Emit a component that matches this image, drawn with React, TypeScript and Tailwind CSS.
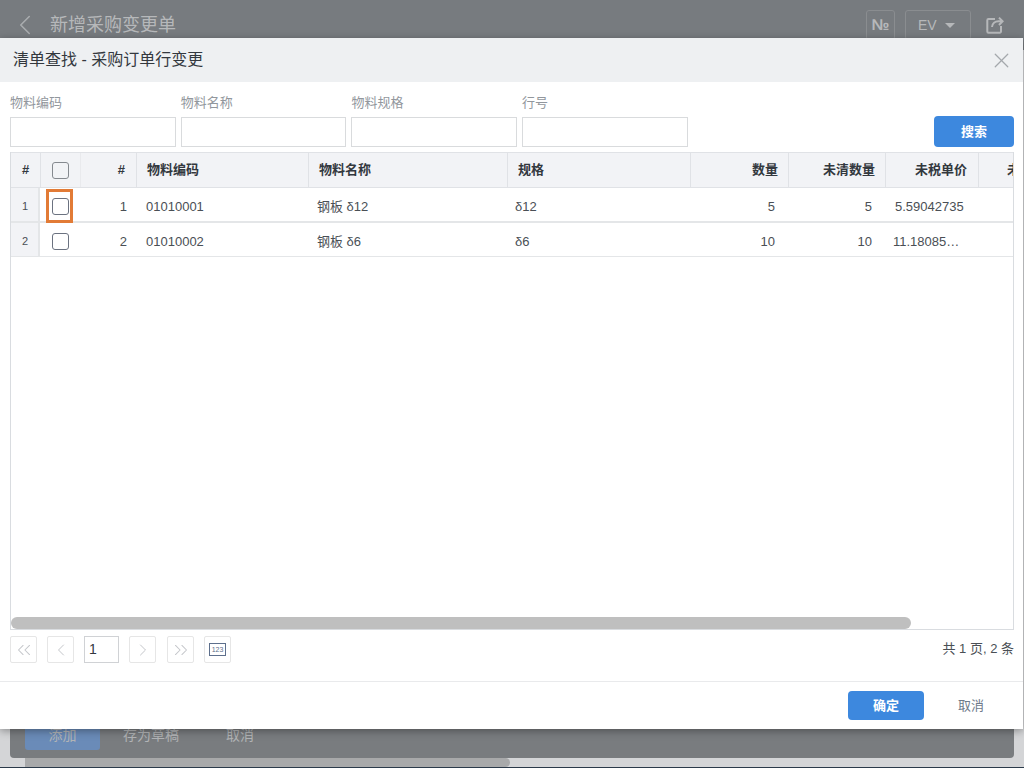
import { ChevronLeft, ChevronRight, ChevronsLeft, ChevronsRight, X } from 'lucide-react';

const font = { fontFamily: '"Liberation Sans", "Noto Sans CJK SC", sans-serif' };

const filters = ['物料编码', '物料名称', '物料规格', '行号'];

const rows = [
  { n: 1, code: '01010001', name: '钢板 δ12', spec: 'δ12', qty: '5', open: '5', price: '5.59042735' },
  { n: 2, code: '01010002', name: '钢板 δ6', spec: 'δ6', qty: '10', open: '10', price: '11.18085…' },
];

function Checkbox({ header }: { header?: boolean }) {
  return (
    <span className={`block h-[17px] w-[17px] rounded-[3px] border ${header ? 'border-[#85898f] bg-[#f2f3f6]' : 'border-[#6b7280] bg-white'}`} />
  );
}

function PageButton({ children }: { children: React.ReactNode }) {
  return (
    <button className="flex h-[27px] w-[27px] items-center justify-center rounded-[2px] border border-[#e6e6e6] bg-white text-[#c4c6ca]">
      {children}
    </button>
  );
}

export default function App() {
  return (
    <div style={font} className="relative h-[768px] w-[1024px] overflow-hidden bg-[#d4d5d7]">
      {/* page behind the modal */}
      <div className="flex h-[50px] items-center justify-between bg-[#777b7f] pl-[8px] pr-[20px]">
        <div className="flex items-center gap-[8px]">
          <ChevronLeft size={34} strokeWidth={1.1} className="text-[#a9acaf]" />
          <span className="text-[18px] text-[#b6b8ba]">新增采购变更单</span>
        </div>
        <div className="flex items-center">
          <span className="flex h-[30px] w-[29px] items-center justify-center rounded-[3px] border border-[#8a8d90] text-[16px] font-bold text-[#b6b8ba]">№</span>
          <span className="ml-[10px] flex h-[30px] w-[66px] items-center rounded-[3px] border border-[#8a8d90] pl-[12px] text-[14px] text-[#b6b8ba]">
            EV
            <span className="ml-[8px] h-0 w-0 border-x-[5px] border-t-[5px] border-x-transparent border-t-[#b6b8ba]" />
          </span>
          <svg width="18" height="18" viewBox="0 0 18 18" fill="none" stroke="#b6b8ba" strokeWidth="2" className="ml-[15px]">
            <path d="M9 3H2.5A1.2 1.2 0 0 0 1.3 4.2v11.3a1.2 1.2 0 0 0 1.2 1.2h11.3a1.2 1.2 0 0 0 1.2-1.2V10" />
            <path d="M6 11c.3-3.5 3-5.7 6.5-5.7H16M13 1.6l3.6 3.7L13 9" />
          </svg>
        </div>
      </div>
      <div className="mx-[10px] mt-[679px] flex h-[29px] items-end rounded-b-[4px] bg-[#797c7f] pb-[8px] pl-[15px] text-[14px] text-[#b2b4b6]">
        <span className="flex h-[30px] w-[75px] items-center justify-center rounded-[3px] bg-[#6a8bb8]">添加</span>
        <span className="ml-[23px] flex h-[30px] items-center">存为草稿</span>
        <span className="ml-[47px] flex h-[30px] items-center">取消</span>
      </div>
      <div className="ml-[25px] h-[9px] w-[485px] rounded-r-[5px] bg-[#a8a9aa]" />
      <div className="h-px bg-[#2b3a4a]" />

      {/* modal */}
      <div className="absolute left-0 right-px top-[38px] flex h-[691px] flex-col bg-white shadow-[0_2px_8px_rgba(0,0,0,0.35)]">
        <div className="flex h-[44px] shrink-0 items-center justify-between bg-[#eef0f2] pl-[13px] pr-[9px]">
          <span className="text-[16px] text-[#33383e]">清单查找 - 采购订单行变更</span>
          <X size={25} strokeWidth={1.2} className="text-[#a4a8ac]" />
        </div>

        <div className="flex h-[70px] shrink-0 pl-[10px] pr-[9px] pt-[12px]">
          <div className="flex gap-[5px]">
            {filters.map((label) => (
              <div key={label} className="w-[165.7px]">
                <div className="h-[23px] text-[13px] leading-[17px] text-[#92979d]">{label}</div>
                <div className="h-[30px] border border-[#d9dbdd] bg-white" />
              </div>
            ))}
          </div>
          <button className="ml-auto mt-[22px] h-[31px] w-[80px] rounded-[4px] bg-[#3d88de] text-[13px] font-bold text-white">搜索</button>
        </div>

        {/* grid */}
        <div className="relative ml-[10px] mr-[9px] h-[478px] shrink-0 overflow-hidden border-x border-b border-[#d9dce0]">
          <div className="flex h-[36px] border-y border-[#e0e2e6] bg-[#f2f3f6] text-[13px] font-bold text-[#33383e]">
            <div className="flex w-[30px] shrink-0 items-center justify-center border-r border-[#e0e2e6]">#</div>
            <div className="flex w-[40px] shrink-0 items-center justify-center border-r border-[#e9eaed]"><Checkbox header /></div>
            <div className="flex w-[56px] shrink-0 items-center justify-end border-r border-[#e0e2e6] pr-[11px]">#</div>
            <div className="flex w-[172px] shrink-0 items-center border-r border-[#e0e2e6] pl-[10px]">物料编码</div>
            <div className="flex w-[199px] shrink-0 items-center border-r border-[#e0e2e6] pl-[10px]">物料名称</div>
            <div className="flex w-[183px] shrink-0 items-center border-r border-[#e0e2e6] pl-[10px]">规格</div>
            <div className="flex w-[98px] shrink-0 items-center justify-end border-r border-[#e0e2e6] pr-[10px]">数量</div>
            <div className="flex w-[97px] shrink-0 items-center justify-end border-r border-[#e0e2e6] pr-[10px]">未清数量</div>
            <div className="flex w-[93px] shrink-0 items-center justify-end border-r border-[#e0e2e6] pr-[11px]">未税单价</div>
            <div className="shrink-0 self-center whitespace-nowrap pl-[28px]">未税</div>
          </div>
          {rows.map((r) => (
            <div key={r.n} className={`flex text-[13px] text-[#4a4f55] ${r.n === 1 ? 'h-[35px] border-b-2 border-[#e4e6e8]' : 'h-[34px] border-b border-[#e4e6e8]'}`}>
              <div className="flex w-[29px] shrink-0 items-center justify-center border-r-2 border-[#e4e6e8] bg-[#f2f3f6] pl-px pt-[4px] text-[11px]">{r.n}</div>
              <div className="relative flex w-[41px] shrink-0 items-center justify-center pt-[4px]">
                <Checkbox />
                {r.n === 1 && <span className="absolute left-[6px] top-px h-[34px] w-[27px] border-[3px] border-[#e27b36]" />}
              </div>
              <div className="flex w-[56px] shrink-0 items-center justify-end pr-[10px] pt-[4px]">{r.n}</div>
              <div className="flex w-[171px] shrink-0 items-center pl-[9px] pt-[4px]">{r.code}</div>
              <div className="flex w-[198px] shrink-0 items-center pl-[9px] pt-[4px]">{r.name}</div>
              <div className="flex w-[184px] shrink-0 items-center pl-[9px] pt-[4px]">{r.spec}</div>
              <div className="flex w-[98px] shrink-0 items-center justify-end pr-[13px] pt-[4px]">{r.qty}</div>
              <div className="flex w-[97px] shrink-0 items-center justify-end pr-[13px] pt-[4px]">{r.open}</div>
              <div className={`flex w-[93px] shrink-0 items-center pt-[4px] ${r.n === 1 ? 'pl-[10px]' : 'pl-[8px]'}`}>{r.price}</div>
            </div>
          ))}
          {/* scrollbar overlays the grid body */}
          <div className="absolute bottom-0 left-0 h-[12px] w-[900px] rounded-[6px] bg-[#bfbfbf]" />
        </div>

        {/* pager */}
        <div className="flex h-[51px] shrink-0 items-start pl-[10px] pr-[9px] pt-[6px]">
          <div className="flex items-center text-[#c4c6ca]">
            <PageButton><ChevronsLeft size={22} strokeWidth={1.1} /></PageButton>
            <span className="ml-[10px]"><PageButton><ChevronLeft size={20} strokeWidth={1.2} /></PageButton></span>
            <span className="ml-[10px] flex h-[27px] w-[35px] items-center border border-[#d0d2d5] pl-[4px] text-[14px] text-[#33383e]">1</span>
            <span className="ml-[10px]"><PageButton><ChevronRight size={20} strokeWidth={1.2} /></PageButton></span>
            <span className="ml-[11px]"><PageButton><ChevronsRight size={22} strokeWidth={1.1} /></PageButton></span>
            <span className="ml-[10px]">
              <PageButton>
                <span className="flex h-[13px] w-[17px] items-center justify-center border-[1.5px] border-[#5d6f8c] text-[7px] leading-none text-[#5d6f8c]">123</span>
              </PageButton>
            </span>
          </div>
          <span className="ml-auto pt-[3px] text-[13px] text-[#4a4f55]">共 1 页, 2 条</span>
        </div>

        {/* footer */}
        <div className="flex flex-1 items-start border-t border-[#e9eaec] pr-[39px] pt-[9px]">
          <button className="ml-auto h-[29px] w-[76px] rounded-[4px] bg-[#3d88de] text-[13px] font-bold text-white">确定</button>
          <span className="ml-[34px] flex h-[29px] items-center text-[13px] text-[#6e7a8a]">取消</span>
        </div>
      </div>
    </div>
  );
}
